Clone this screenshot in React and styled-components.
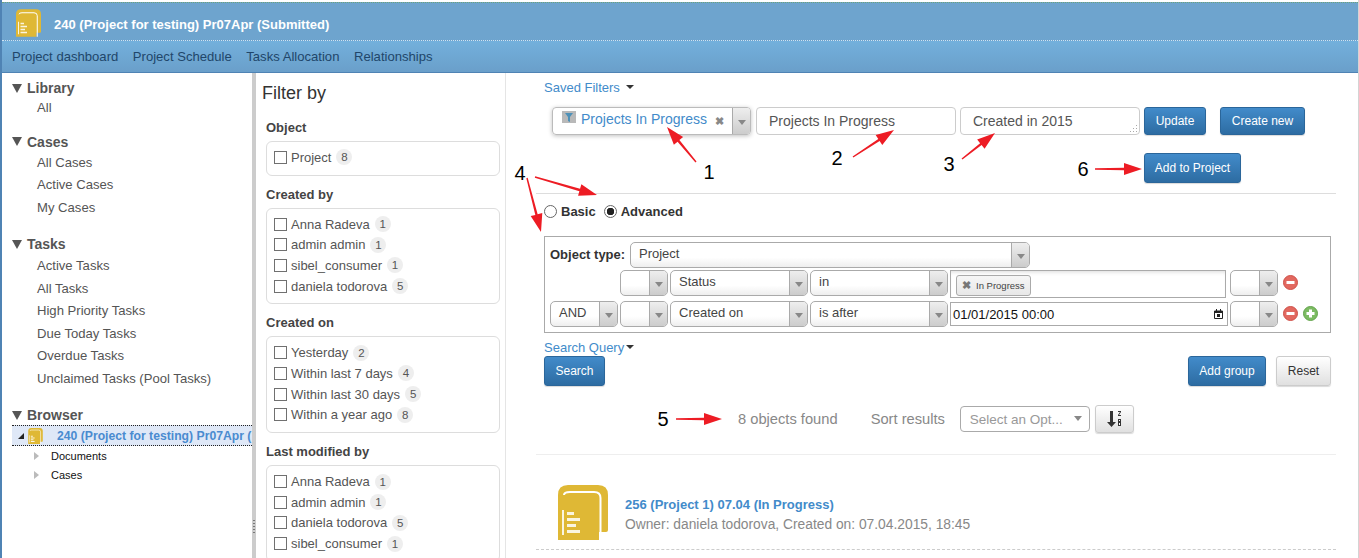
import React from "react";
import styled, { createGlobalStyle } from "styled-components";

const GlobalStyle = createGlobalStyle`
  html, body { margin: 0; padding: 0; background: #fff; }
  body { font-family: "Liberation Sans", Arial, sans-serif; font-size: 14px; color: #333; }
  * { box-sizing: border-box; }
`;

const Page = styled.div`
  position: relative;
  width: 1359px;
  height: 558px;
  overflow: hidden;
  display: flex;
  flex-direction: column;
  border-left: 2px solid #4f83b4;
  border-right: 1px solid #d4d4d4;
  padding-top: 2px;
`;

const TitleBar = styled.div`
  height: 39px;
  flex: none;
  display: flex;
  align-items: center;
  gap: 13px;
  padding: 5px 0 0 14px;
  background: #6ea4ce;
  border-top: 1px dotted #6da37a;
  border-bottom: 1px dotted #cfe3f2;
  color: #fff;
  font-weight: bold;
  font-size: 13px;
`;

const TitleIcon = styled.span`
  display: flex;
  margin-bottom: 2px;
`;

const NavBar = styled.nav`
  height: 32px;
  flex: none;
  display: flex;
  align-items: center;
  gap: 14.5px;
  padding: 0 0 0 10px;
  background: linear-gradient(#73b0dc, #6a9fca);
  border-bottom: 1px solid #4f83b4;
`;

const NavLink = styled.a`
  color: #21466a;
  font-size: 13.1px;
`;

const Body = styled.div`
  flex: 1;
  min-height: 0;
  display: flex;
`;

const Sidebar = styled.aside`
  width: 250px;
  flex: none;
  overflow: hidden;
  padding: 5px 0 0 10px;
`;

const Section = styled.section`
  margin-bottom: ${(p) => p.$gap || 14}px;
`;

const SectionTitle = styled.div`
  display: flex;
  align-items: center;
  gap: 5px;
  height: 20px;
  margin-bottom: ${(p) => p.$lead || 0}px;
  font-weight: bold;
  font-size: 14px;
  color: #555;
  &::before {
    content: "";
    width: 0;
    height: 0;
    border-left: 5px solid transparent;
    border-right: 5px solid transparent;
    border-top: 9px solid #555;
  }
`;

const SideItem = styled.a`
  display: block;
  height: 22.5px;
  line-height: 20px;
  padding-left: 25px;
  color: #555;
  font-size: 13.1px;
`;

const TreeRoot = styled.div`
  height: 21px;
  display: flex;
  align-items: center;
  background: #dfe8f7;
  border-top: 1px dotted #222;
  border-bottom: 1px dotted #222;
  white-space: nowrap;
  overflow: hidden;
  color: #4a8bd0;
  font-weight: bold;
  font-size: 12.2px;
`;

const TreeArrow = styled.span`
  flex: none;
  width: 0;
  height: 0;
  margin-left: 6px;
  margin-right: 4px;
  border-left: 6px solid transparent;
  border-bottom: 6px solid #222;
`;

const TreeLabel = styled.span`
  margin-left: 14px;
`;

const TreeChild = styled.div`
  display: flex;
  align-items: center;
  height: 19px;
  padding-left: 22px;
  font-size: 11px;
  color: #111;
  &::before {
    content: "";
    width: 0;
    height: 0;
    margin-right: 12px;
    border-top: 4px solid transparent;
    border-bottom: 4px solid transparent;
    border-left: 5px solid #bbb;
  }
`;

const Splitter = styled.div`
  position: relative;
  width: 4px;
  flex: none;
  background: #ccc;
  &::after {
    content: "";
    position: absolute;
    left: 1px;
    top: 447px;
    width: 2px;
    height: 13px;
    background: repeating-linear-gradient(#777 0 1px, transparent 1px 3px);
  }
`;

const FilterColumn = styled.aside`
  width: 250px;
  flex: none;
  overflow: hidden;
  padding: 9px 5px 0 6px;
  border-right: 1px solid #e5e5e5;
`;

const FilterHeading = styled.h2`
  margin: 0 0 15px;
  font-size: 18px;
  line-height: 22px;
  font-weight: normal;
  color: #333;
`;

const FilterGroup = styled.div`
  margin-left: 4px;
  margin-bottom: 10px;
`;

const FilterLabel = styled.div`
  height: 22px;
  line-height: 18px;
  font-weight: bold;
  font-size: 13px;
  color: #444;
`;

const FilterBox = styled.div`
  padding: 5px 7px 7px;
  border: 1px solid #ddd;
  border-radius: 6px;
`;

const FilterRow = styled.label`
  display: flex;
  align-items: center;
  height: 20.7px;
  gap: 4px;
  color: #555;
  font-size: 13px;
  white-space: nowrap;
`;

const Checkbox = styled.span`
  width: 13px;
  height: 13px;
  flex: none;
  border: 1px solid #707070;
  background: #fff;
`;

const Badge = styled.span`
  min-width: 16px;
  height: 16px;
  margin-left: 1px;
  padding: 0 4px;
  border-radius: 8px;
  background: #eee;
  color: #555;
  font-size: 11.5px;
  line-height: 16px;
  text-align: center;
`;

const Main = styled.main`
  flex: 1;
  min-width: 0;
  overflow: hidden;
  padding: 6px 22px 0 30px;
`;

const BlueLink = styled.a`
  display: flex;
  align-items: center;
  gap: 6px;
  margin-left: 8px;
  height: 16px;
  color: #428bca;
  font-size: 13px;
  &::after {
    content: "";
    width: 0;
    height: 0;
    border-left: 4px solid transparent;
    border-right: 4px solid transparent;
    border-top: 4px solid #333;
  }
`;

const SavedRow = styled.div`
  display: flex;
  margin: 12px 0 0 16px;
`;

const SavedBox = styled.div`
  width: 199px;
  height: 28px;
  flex: none;
  display: flex;
  border: 1px solid #bbb;
  border-radius: 4px;
  box-shadow: 0 1px 4px rgba(0, 0, 0, 0.25);
  overflow: hidden;
`;

const SavedValue = styled.div`
  flex: 1;
  display: flex;
  align-items: center;
  gap: 5px;
  padding: 0 0 4px 9px;
  color: #428bca;
  font-size: 14px;
  white-space: nowrap;
`;

const ClearMark = styled.span`
  margin: 4px 0 0 3px;
  color: #888;
  font-size: 11px;
  font-weight: bold;
`;

const TextField = styled.div`
  position: relative;
  width: ${(p) => p.$width}px;
  height: 28px;
  flex: none;
  margin-left: ${(p) => p.$left}px;
  padding-left: 12px;
  border: 1px solid #ccc;
  border-radius: 4px;
  line-height: 26px;
  color: #555;
  font-size: 14px;
`;

const ResizeGrip = styled.span`
  position: absolute;
  right: 2px;
  bottom: 2px;
  width: 8px;
  height: 8px;
  background: radial-gradient(circle, #aaa 1px, transparent 1px) 0 0 / 3px 3px;
  clip-path: polygon(100% 0, 100% 100%, 0 100%);
`;

const Button = styled.button`
  width: ${(p) => p.$width}px;
  height: ${(p) => p.$height || 28}px;
  flex: none;
  margin-left: ${(p) => p.$left || 0}px;
  padding: 0;
  border: 1px solid ${(p) => (p.$plain ? "#ccc" : "#2b669a")};
  border-radius: 3px;
  background: ${(p) =>
    p.$plain
      ? "linear-gradient(#fff, #e0e0e0)"
      : "linear-gradient(#428bca, #2d6ca2)"};
  box-shadow: 0 1px 1px rgba(0, 0, 0, 0.15);
  color: ${(p) => (p.$plain ? "#333" : "#fff")};
  font-family: inherit;
  font-size: 12px;
`;

const ProjectAction = styled.div`
  display: flex;
  margin: 18px 0 0 608px;
`;

const Divider = styled.hr`
  margin: ${(p) => p.$top}px 0 0 ${(p) => p.$left || 0}px;
  border: 0;
  border-top: 1px solid ${(p) => p.$color || "#ddd"};
`;

const ModeRow = styled.div`
  display: flex;
  align-items: center;
  height: 16px;
  margin: 9px 0 0 8px;
  font-size: 13px;
  font-weight: bold;
  color: #333;
`;

const Radio = styled.span`
  width: 13px;
  height: 13px;
  margin-left: ${(p) => p.$left || 0}px;
  margin-right: 4px;
  border: 1px solid #666;
  border-radius: 50%;
  background: ${(p) =>
    p.$checked ? "radial-gradient(circle, #222 0 3.5px, #fff 4px)" : "#fff"};
`;

const QueryBox = styled.div`
  width: 787px;
  height: 97px;
  margin: 17px 0 0 8px;
  padding: 5px;
  border: 1px solid #aaa;
  display: flex;
  flex-direction: column;
`;

const QueryRow = styled.div`
  display: flex;
  align-items: flex-start;
  gap: 2px;
  margin-top: ${(p) => p.$top || 0}px;
`;

const TypeLabel = styled.span`
  width: 78px;
  font-weight: bold;
  font-size: 13px;
  color: #333;
  line-height: 26px;
`;

const SelectBox = styled.div`
  width: ${(p) => p.$width}px;
  height: 26px;
  flex: none;
  display: flex;
  border: 1px solid #aaa;
  border-radius: 5px;
  overflow: hidden;
  background: linear-gradient(#fff 60%, #eee);
`;

const SelectValue = styled.span`
  flex: 1;
  padding-left: 8px;
  line-height: 21px;
  font-size: 13px;
  color: #444;
`;

const SelectCaret = styled.span`
  width: 18px;
  flex: none;
  display: flex;
  align-items: center;
  justify-content: center;
  padding-top: 3px;
  border-left: 1px solid #aaa;
  background: linear-gradient(#eee, #ccc);
  &::after {
    content: "";
    width: 0;
    height: 0;
    border-left: 4px solid transparent;
    border-right: 4px solid transparent;
    border-top: 5px solid #888;
  }
`;

const RowSpacer = styled.span`
  width: 68px;
  flex: none;
`;

const TagField = styled.div`
  width: 276px;
  height: 28px;
  flex: none;
  margin-right: 2px;
  padding: 4px 5px;
  border: 1px solid #aaa;
  box-shadow: inset 0 4px 4px -3px rgba(0, 0, 0, 0.15);
`;

const Tag = styled.span`
  display: inline-flex;
  align-items: center;
  gap: 5px;
  height: 21px;
  padding: 0 5px;
  border: 1px solid #aaa;
  border-radius: 3px;
  background: linear-gradient(#f6f6f6, #e8e8e8);
  color: #444;
  font-size: 9.5px;
`;

const TagClose = styled.span`
  color: #777;
  font-size: 11px;
  font-weight: bold;
`;

const DateField = styled.div`
  width: 278px;
  height: 24px;
  flex: none;
  margin-top: 1px;
  display: flex;
  align-items: center;
  justify-content: space-between;
  padding: 0 4px 0 2px;
  border: 1px solid #aaa;
  color: #111;
  font-size: 13px;
`;

const RoundIcon = styled.svg`
  width: 15px;
  height: 15px;
  flex: none;
  margin: 5px 0 0 ${(p) => p.$left || 0}px;
`;

const QueryFooter = styled.div`
  display: flex;
  margin: 6px 0 0 8px;
  width: 787px;
`;

const FooterLeft = styled.div`
  flex: 1;
`;

const SearchQueryLink = styled(BlueLink)`
  margin-left: 0;
  gap: 2px;
`;

const SearchButton = styled(Button)`
  margin-top: 1px;
  display: block;
`;

const FooterActions = styled.div`
  display: flex;
  gap: 10px;
  padding-top: 17px;
`;

const ResultsBar = styled.div`
  display: flex;
  align-items: center;
  height: 28px;
  margin: 19px 0 0 202px;
  color: #888;
  font-size: 14.7px;
`;

const SortLabel = styled.span`
  margin-left: 33px;
  width: 89px;
`;

const OptionSelect = styled.div`
  width: 130px;
  height: 26px;
  flex: none;
  display: flex;
  align-items: center;
  justify-content: space-between;
  padding: 0 7px 0 9px;
  border: 1px solid #aaa;
  border-radius: 4px;
  color: #999;
  font-size: 13.5px;
  &::after {
    content: "";
    width: 0;
    height: 0;
    margin-bottom: 2px;
    border-left: 4px solid transparent;
    border-right: 4px solid transparent;
    border-top: 5px solid #888;
  }
`;

const SortButton = styled(Button)`
  display: flex;
  align-items: center;
  justify-content: center;
`;

const ResultRow = styled.div`
  display: flex;
  align-items: center;
  height: 95px;
  padding: 21px 0 0 22px;
  border-bottom: 1px dashed #ccc;
`;

const ResultText = styled.div`
  margin-left: 17px;
  padding-top: 5px;
`;

const ResultTitle = styled.div`
  color: #428bca;
  font-size: 13px;
  font-weight: bold;
  line-height: 20px;
`;

const ResultMeta = styled.div`
  color: #888;
  font-size: 13.8px;
  line-height: 20px;
`;

const NumberMark = styled.span`
  position: absolute;
  left: ${(p) => p.$x}px;
  top: ${(p) => p.$y}px;
  transform: translate(-50%, -50%);
  color: #000;
  font-size: 20px;
  line-height: 1;
`;

const ArrowLayer = styled.svg`
  position: absolute;
  left: -2px;
  top: 0;
  width: 1359px;
  height: 558px;
  pointer-events: none;
`;

const ProjectIcon = ({ width, height }) => (
  <svg width={width} height={height} viewBox="0 0 50 55" style={{ flex: "none" }}>
    <path d="M0 55V10Q0 0 10 0H40Q50 0 50 10V45Q50 47 48 47H41V55Z" fill="#dfb835" />
    <path d="M6 10Q6 7 12 7H36Q42.5 7 42.5 13V55" fill="none" stroke="#fff" strokeWidth="2" />
    <path d="M4 25H6V50H4Z M9 27H16V30H9Z M9 33H22V36H9Z M9 39H18V42H9Z M9 45H22V48H9Z" fill="#fff" opacity="0.85" />
  </svg>
);

const Funnel = () => (
  <svg width="14" height="12" viewBox="0 0 14 12" style={{ flex: "none", marginBottom: 4 }}>
    <path d="M0 0H14V12H0Z" fill="#b9b9b9" />
    <path d="M3 2H11L8 6V11L6 10V6Z" fill="#4f91b8" />
  </svg>
);

const Calendar = () => (
  <svg width="9" height="10" viewBox="0 0 9 10">
    <path d="M0.5 2H8.5V9.5H0.5Z" fill="none" stroke="#222" />
    <path d="M2 0H3V3H2Z M6 0H7V3H6Z M1 2H8V4H1Z M3 5H6V8H3Z" fill="#222" />
  </svg>
);

const Minus = ({ left }) => (
  <RoundIcon viewBox="0 0 15 15" $left={left}>
    <circle cx="7.5" cy="7.5" r="7" fill="#e2685f" stroke="#cf5049" />
    <rect x="3.5" y="6" width="8" height="3" fill="#fff" />
  </RoundIcon>
);

const Plus = () => (
  <RoundIcon viewBox="0 0 15 15" $left={3}>
    <circle cx="7.5" cy="7.5" r="7" fill="#7cbb62" stroke="#63a44c" />
    <path d="M6 3.5H9V6H11.5V9H9V11.5H6V9H3.5V6H6Z" fill="#fff" />
  </RoundIcon>
);

const SortIcon = () => (
  <svg width="17" height="18" viewBox="0 0 17 18">
    <path d="M4 1H7V12H10L5.5 17L1 12H4Z" fill="#333" />
    <path d="M12 1H15V2L13 5H15V6H12V5L14 2H12Z M12 9H15V16H12Z" fill="#333" />
    <path d="M13 10H14V11H13Z M13 13H14V15H13Z" fill="#fff" />
  </svg>
);

const Select = ({ width, value }) => (
  <SelectBox $width={width}>
    <SelectValue>{value}</SelectValue>
    <SelectCaret />
  </SelectBox>
);

const arrows = [
  [696, 162, 667, 127],
  [853, 157, 894, 130],
  [962, 159, 995, 133],
  [535, 177, 597, 195],
  [527, 178, 541, 232],
  [676, 419, 722, 419],
  [1095, 169, 1142, 169],
];

const marks = [
  ["1", 709, 172],
  ["2", 837, 158],
  ["3", 949, 164],
  ["4", 520, 173],
  ["5", 663, 419],
  ["6", 1083, 169],
];

const sections = [
  { title: "Library", items: ["All"], lead: 0, gap: 11 },
  { title: "Cases", items: ["All Cases", "Active Cases", "My Cases"], lead: 1, gap: 14 },
  {
    title: "Tasks",
    items: [
      "Active Tasks",
      "All Tasks",
      "High Priority Tasks",
      "Due Today Tasks",
      "Overdue Tasks",
      "Unclaimed Tasks (Pool Tasks)",
    ],
    lead: 2,
    gap: 14,
  },
];

const filters = [
  { label: "Object", rows: [["Project", 8]] },
  {
    label: "Created by",
    rows: [["Anna Radeva", 1], ["admin admin", 1], ["sibel_consumer", 1], ["daniela todorova", 5]],
  },
  {
    label: "Created on",
    rows: [["Yesterday", 2], ["Within last 7 days", 4], ["Within last 30 days", 5], ["Within a year ago", 8]],
  },
  {
    label: "Last modified by",
    rows: [["Anna Radeva", 1], ["admin admin", 1], ["daniela todorova", 5], ["sibel_consumer", 1]],
  },
];

// red call-out arrow: thin shaft widening into a head at the tip
const arrowPath = ([x1, y1, x2, y2]) => {
  const len = Math.hypot(x2 - x1, y2 - y1);
  const ux = (x2 - x1) / len;
  const uy = (y2 - y1) / len;
  const bx = x2 - ux * 18;
  const by = y2 - uy * 18;
  const px = -uy;
  const py = ux;
  return `M${x1 - px * 0.7} ${y1 - py * 0.7}L${bx - px * 1.2} ${by - py * 1.2}L${bx - px * 6} ${by - py * 6}L${x2} ${y2}L${bx + px * 6} ${by + py * 6}L${bx + px * 1.2} ${by + py * 1.2}L${x1 + px * 0.7} ${y1 + py * 0.7}Z`;
};

const App = () => (
  <Page>
    <GlobalStyle />
    <TitleBar>
      <TitleIcon>
        <ProjectIcon width={25} height={28} />
      </TitleIcon>
      240 (Project for testing) Pr07Apr (Submitted)
    </TitleBar>
    <NavBar>
      <NavLink>Project dashboard</NavLink>
      <NavLink>Project Schedule</NavLink>
      <NavLink>Tasks Allocation</NavLink>
      <NavLink>Relationships</NavLink>
    </NavBar>
    <Body>
      <Sidebar>
        {sections.map((s) => (
          <Section key={s.title} $gap={s.gap}>
            <SectionTitle $lead={s.lead}>{s.title}</SectionTitle>
            {s.items.map((item) => (
              <SideItem key={item}>{item}</SideItem>
            ))}
          </Section>
        ))}
        <SectionTitle>Browser</SectionTitle>
        <TreeRoot>
          <TreeArrow />
          <ProjectIcon width={15} height={16} />
          <TreeLabel>240 (Project for testing) Pr07Apr (</TreeLabel>
        </TreeRoot>
        <TreeChild>Documents</TreeChild>
        <TreeChild>Cases</TreeChild>
      </Sidebar>
      <Splitter />
      <FilterColumn>
        <FilterHeading>Filter by</FilterHeading>
        {filters.map((f) => (
          <FilterGroup key={f.label}>
            <FilterLabel>{f.label}</FilterLabel>
            <FilterBox>
              {f.rows.map(([name, count]) => (
                <FilterRow key={name}>
                  <Checkbox />
                  {name}
                  <Badge>{count}</Badge>
                </FilterRow>
              ))}
            </FilterBox>
          </FilterGroup>
        ))}
      </FilterColumn>
      <Main>
        <BlueLink>Saved Filters</BlueLink>
        <SavedRow>
          <SavedBox>
            <SavedValue>
              <Funnel />
              Projects In Progress
              <ClearMark>✖</ClearMark>
            </SavedValue>
            <SelectCaret />
          </SavedBox>
          <TextField $width={200} $left={5}>Projects In Progress</TextField>
          <TextField $width={180} $left={4}>
            Created in 2015
            <ResizeGrip />
          </TextField>
          <Button $width={62} $left={4}>Update</Button>
          <Button $width={85} $left={14}>Create new</Button>
        </SavedRow>
        <ProjectAction>
          <Button $width={97} $height={30}>Add to Project</Button>
        </ProjectAction>
        <Divider $top={10} />
        <ModeRow>
          <Radio />
          Basic
          <Radio $checked $left={8} />
          Advanced
        </ModeRow>
        <QueryBox>
          <QueryRow>
            <TypeLabel>Object type:</TypeLabel>
            <Select width={400} value="Project" />
          </QueryRow>
          <QueryRow $top={2}>
            <RowSpacer />
            <Select width={48} />
            <Select width={138} value="Status" />
            <Select width={138} value="in" />
            <TagField>
              <Tag>
                <TagClose>✖</TagClose>
                In Progress
              </Tag>
            </TagField>
            <Select width={48} />
            <Minus left={3} />
          </QueryRow>
          <QueryRow $top={3}>
            <Select width={68} value="AND" />
            <Select width={48} />
            <Select width={138} value="Created on" />
            <Select width={138} value="is after" />
            <DateField>
              01/01/2015 00:00
              <Calendar />
            </DateField>
            <Select width={48} />
            <Minus left={3} />
            <Plus />
          </QueryRow>
        </QueryBox>
        <QueryFooter>
          <FooterLeft>
            <SearchQueryLink>Search Query</SearchQueryLink>
            <SearchButton $width={61} $height={30}>Search</SearchButton>
          </FooterLeft>
          <FooterActions>
            <Button $width={78} $height={30}>Add group</Button>
            <Button $width={55} $height={30} $plain>Reset</Button>
          </FooterActions>
        </QueryFooter>
        <ResultsBar>
          <span>8 objects found</span>
          <SortLabel>Sort results</SortLabel>
          <OptionSelect>Select an Opt...</OptionSelect>
          <SortButton $width={39} $left={5} $plain><SortIcon /></SortButton>
        </ResultsBar>
        <Divider $top={21} $color="#eee" />
        <ResultRow>
          <ProjectIcon width={50} height={55} />
          <ResultText>
            <ResultTitle>256 (Project 1) 07.04 (In Progress)</ResultTitle>
            <ResultMeta>Owner: daniela todorova, Created on: 07.04.2015, 18:45</ResultMeta>
          </ResultText>
        </ResultRow>
      </Main>
    </Body>
    <ArrowLayer viewBox="0 0 1359 558">
      {arrows.map((a) => (
        <path key={a.join()} d={arrowPath(a)} fill="#ed1c24" />
      ))}
    </ArrowLayer>
    {marks.map(([n, x, y]) => (
      <NumberMark key={n} $x={x - 2} $y={y}>{n}</NumberMark>
    ))}
  </Page>
);

export default App;
